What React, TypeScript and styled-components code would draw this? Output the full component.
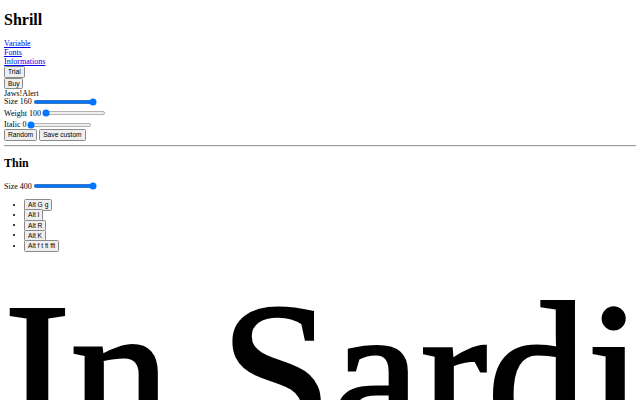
import React from 'react'
import styled, { createGlobalStyle } from 'styled-components'

const GlobalStyle = createGlobalStyle`
  html, body {
    margin: 0;
    padding: 0;
    background: #fff;
    overflow: hidden;
  }
`

// The reference is a 1280x800 page photographed at half size
const Page = styled.div`
  zoom: 0.5;
  width: 1280px;
  height: 800px;
  box-sizing: border-box;
  padding: 0 8px;
  overflow: hidden;
  font-family: 'Liberation Serif', 'Times New Roman', serif;
  font-size: 16px;
  color: #000;
`

const Title = styled.h1`
  font-size: 32px;
  font-weight: bold;
  margin: 21px 0;
`

const Nav = styled.nav`
  display: flex;
  flex-direction: column;
  align-items: flex-start;
`

const NavLink = styled.a`
  color: #0000ee;
  text-decoration: underline;
  line-height: 18px;
`

const Block = styled.div`
  line-height: 18px;
`

const Button = styled.button`
  font-family: 'Liberation Sans', Arial, sans-serif;
  font-size: 13.33px;
  line-height: 15px;
  padding: 2px 6px;
  margin: 0;
  background: #efefef;
  color: #000;
  border: 1px solid #8a8a8a;
  border-radius: 3px;
  vertical-align: middle;
`

const Controls = styled.div`
  margin-top: -4px;
`

const Control = styled.label`
  display: flex;
  align-items: center;
  height: 23px;
`

const Range = styled.input`
  width: 129px;
  margin: 2px;
  accent-color: #0075ff;
`

const Actions = styled.div`
  display: flex;
  gap: 4px;
  margin-top: -3px;
`

const Rule = styled.hr`
  margin: 8px 0;
  border: none;
  border-top: 1px solid #9a9a9a;
  border-bottom: 1px solid #eee;
`

const Subtitle = styled.h2`
  font-size: 24px;
  font-weight: bold;
  margin: 18px 0 20px;
`

const AltList = styled.ul`
  margin: 14px 0 16px;
  padding-left: 40px;
  list-style: disc;
`

const AltItem = styled.li`
  height: 20.5px;
  line-height: 20.5px;
`

const Specimen = styled.div<{ $size: number }>`
  font-size: ${p => p.$size}px;
  line-height: normal;
  white-space: nowrap;
  -webkit-text-stroke: 6px #000;
`

const alternates = ['Alt G g', 'Alt I', 'Alt R', 'Alt K', 'Alt f t fi ffi']

export default function App() {
  return (
    <>
      <GlobalStyle />
      <Page>
        <Title>Shrill</Title>
        <Nav>
          <NavLink href="#variable">Variable</NavLink>
          <NavLink href="#fonts">Fonts</NavLink>
          <NavLink href="#informations">Informations</NavLink>
        </Nav>
        <div><Button>Trial</Button></div>
        <div><Button>Buy</Button></div>
        <Block><span>Jaws!</span><span>Alert</span></Block>
        <Controls>
          <Control>Size 160<Range type="range" min={10} max={160} defaultValue={160} /></Control>
          <Control>Weight 100<Range type="range" min={100} max={900} defaultValue={100} /></Control>
          <Control>Italic 0<Range type="range" min={0} max={100} defaultValue={0} /></Control>
        </Controls>
        <Actions>
          <Button>Random</Button>
          <Button>Save custom</Button>
        </Actions>
        <Rule />
        <Subtitle>Thin</Subtitle>
        <Control>Size 400<Range type="range" min={10} max={400} defaultValue={400} /></Control>
        <AltList>
          {alternates.map(a => (
            <AltItem key={a}><Button>{a}</Button></AltItem>
          ))}
        </AltList>
        <Specimen $size={400}>In Sardinia</Specimen>
      </Page>
    </>
  )
}
